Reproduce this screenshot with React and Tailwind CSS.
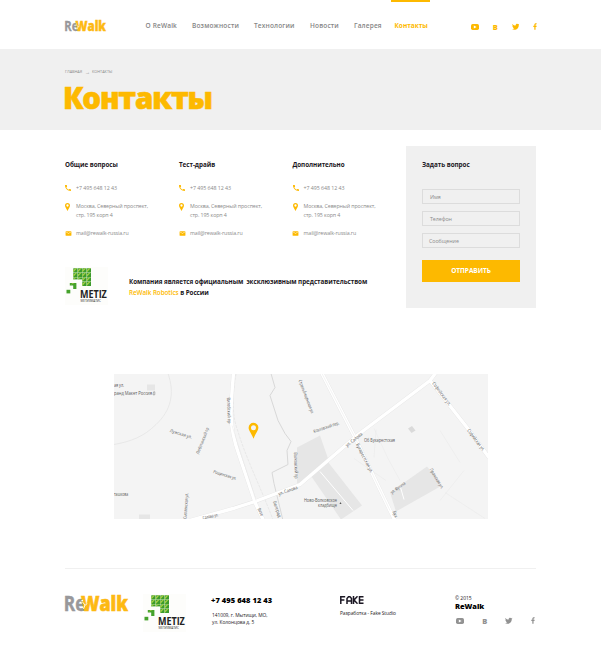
import React from "react";
import { FaTwitter, FaFacebookF } from "react-icons/fa";
import { MdCall, MdEmail } from "react-icons/md";

function Youtube({ hole }) {
  return (
    <svg viewBox="0 0 16 12" className="h-[6px] w-[8px]">
      <rect width="16" height="12" rx="3.4" fill="currentColor" />
      <path d="M5.600 3v6l5.600-3z" fill={hole} />
    </svg>
  );
}

function Socials({ className }) {
  return (
    <div className={"flex items-center justify-between " + className}>
      <Youtube hole="#fff" />
      <span className="text-[7.500px] leading-[8px] font-extrabold">В</span>
      <FaTwitter className="size-[7.500px]" />
      <FaFacebookF className="h-[7px] w-[4px]" />
    </div>
  );
}

function Logo({ className }) {
  return (
    <svg viewBox="0 0 63 16" className={"overflow-visible " + className} fontFamily="Open Sans, sans-serif" fontWeight="800">
      <text x="-1.200" y="15.200" fontSize="20.500" fontWeight="700" fill="#98989b" stroke="#98989b" strokeWidth=".5" textLength="21.500" lengthAdjust="spacingAndGlyphs">Re</text>
      <text x="16" y="15.200" fontSize="20.500" fill="#fdb913" stroke="#fdb913" strokeWidth=".6" textLength="47" lengthAdjust="spacingAndGlyphs">Walk</text>
      <path d="M17.500 6l2.500 3-1.500 4M20 9.500l2-2" fill="none" stroke="#fff" strokeWidth=".9" />
      <circle cx="17.200" cy="4.600" r=".9" fill="#fff" />
    </svg>
  );
}

const cells = [
  [0, 0], [1, 0], [2, 0], [3, 0],
  [0, 1], [1, 1], [2, 1], [3, 1],
  [0, 2, 0.5], [1, 2, 0.5], [2, 2], [3, 2],
  [2, 3], [3, 3],
];

function Metiz({ className }) {
  return (
    <svg viewBox="0 0 43 38" className={className} fontFamily="Open Sans, sans-serif">
      <rect width="43" height="38" fill="#fdfdfb" />
      {cells.map(([c, r, h = 1]) => (
        <g key={c + "-" + r} transform={`translate(${8.3 + c * 4.5} ${1.3 + r * 4.5}) scale(1 ${h})`}>
          <rect width="4.200" height="4.200" fill="#3c9b2c" />
          <path d="M0 4.200V1.800L2.400 0h1.400z" fill="#a5cf45" />
        </g>
      ))}
      <path d="M4.800 16h6.600v6H8.200v-3.400H4.800z" fill="#45a22c" />
      <path d="M5.500 18l2-2h2z" fill="#9ccb3b" />
      <rect x="1.500" y="22.800" width="3.800" height="3.600" fill="#45a22c" />
      <text x="15" y="30.600" fontSize="9.900" fontWeight="700" fill="#222" textLength="26.800" lengthAdjust="spacingAndGlyphs">METIZ</text>
      <text x="15.500" y="35.200" fontSize="3.200" fill="#333" textLength="20.500" lengthAdjust="spacingAndGlyphs">МЕТИЗМАТИС</text>
    </svg>
  );
}

function Pin({ className }) {
  return (
    <svg viewBox="0 0 10 16" className={className}>
      <path fillRule="evenodd" d="M5 0a5 5 0 0 1 5 5c0 3-3.200 6.500-5 11C3.200 11.500 0 8 0 5a5 5 0 0 1 5-5zM5 2.700a2.300 2.300 0 1 0 0 4.600 2.300 2.300 0 0 0 0-4.600z" fill="#fdb900" />
    </svg>
  );
}

function Contact({ title, className }) {
  return (
    <div className={className}>
      <h2 className="h-[10px] text-[6.300px] leading-[10.500px] font-bold text-[#1c1824]">{title}</h2>
      <div className="mt-[13px] flex h-[10px] items-center">
        <MdCall className="mr-[4px] -ml-[1px] size-[8px] text-[#fdb900]" />
        <span>+7 495 648 12 43</span>
      </div>
      <div className="mt-[8.500px] flex">
        <Pin className="mt-[1.500px] mr-[6px] h-[8px] w-[5px]" />
        <p className="tracking-[-0.110px]">Москва, Северный проспект,<br />стр. 195 корп 4</p>
      </div>
      <div className="mt-[8.500px] flex h-[10px] items-center">
        <MdEmail className="mr-[4.500px] -ml-[.5px] size-[7px] text-[#fdb900]" />
        <span className="tracking-[-0.110px]">mail@rewalk-russia.ru</span>
      </div>
    </div>
  );
}

const labels = [
  ["ая ул.", 114, 386, 0, 10],
  ["ранд Макет Россия", 114, 394.500, 0, 38],
  ["Лужская ул.", 169.500, 431.500, 17, 23],
  ["Люботинский пр", 199, 454, -69, 28],
  ["Рощинская ул.", 213, 472.500, 17, 24],
  ["Витебский пр", 227, 397, 88, 26],
  ["ташкова", 114, 495.500, 0, 14],
  ["Смоленская ул.", 186.500, 518.500, -86, 26],
  ["Салова ул.", 203, 519, -12, 16],
  ["ул. Салова", 279, 495, -20, 20],
  ["Вите", 257.500, 508.500, 66, 8],
  ["Белград", 273, 501, 72, 17],
  ["Стрельбищенская ул.", 298.500, 380, 69, 36],
  ["Козловский пер.", 314, 432.500, -19, 27],
  ["Волковский пр", 294, 452, 88, 26],
  ["ул. Салова", 347, 446.500, -38, 20],
  ["Бухарестская ул.", 356, 444, 63, 32],
  ["Софийская ул.", 432, 383, 53, 28],
  ["Софийская ул.", 467, 430, 53, 26],
  ["Об Бухарестская", 364, 441.500, 0, 31],
  ["ул. Фучика", 392, 493.500, -36, 17],
  ["Пражская ул.", 429.500, 469, 59, 23],
  ["Ново-Волковское", 304, 501, 0, 33],
  ["кладбище", 318, 506.300, 0, 19],
  ["Бух", 392.500, 511, 68, 7],
];

function CityMap() {
  return (
    <svg viewBox="114 373.500 374 145.500" className="block h-[145.500px] w-[374px] bg-[#f4f4f4]" fontFamily="Open Sans, sans-serif">
      <g fill="#e6e6e6">
        <path d="M297 447l23-12 9 26-29 22h-3zM308 471l18-12 36 46-21 14zM390 492l37-26 15 19-46 26z" />
        <path d="M408 428l4-2.500 3.500 4.500-4 2.500z" fill="#dadada" />
        <path d="M147 384h8v6h-8zM139 514h11v5h-11z" />
      </g>
      <g fill="none" stroke="#e2e2e2" strokeWidth=".7">
        <path d="M168 373c7 20 3 37-12 51-12 12-25 17-42 20" />
        <path d="M236 373c-4 26-4 42 2 58 7 24 20 50 35 88" strokeDasharray="3 1" />
        <path d="M374 428l14 30 12 22M386 480l-32-22M376 429l-2 28M440 500l24-30M445 492l40 26M440 430l20 32" strokeWidth=".3" />
      </g>
      <path d="M271 373l4 14-5 8 8 25 7 13 6 8-4 9 1 14-16 8 2 11 9 37" fill="none" stroke="#d8d8d8" strokeWidth="1" />
      <g fill="none" stroke="#e4e4e4" strokeWidth="4">
        <path d="M233.500 373c-3 34-5 52 5 80l17 50 8 17M322 373l33 64 35 73 5 10M430 380l37 47 22 30" />
        <path d="M190 520l43-12 22-7 45-17 57-49 73-55 6-8" />
      </g>
      <g fill="none" stroke="#fff" strokeWidth="3.400">
        <path d="M233.500 373c-3 34-5 52 5 80l17 50 8 17M322 373l33 64 35 73 5 10M430 380l37 47 22 30" />
        <path d="M190 520l43-12 22-7 45-17 57-49 73-55 6-8" />
      </g>
      <path d="M320 471l33 39M400 485l4 14" stroke="#fff" />
      <path d="M232 425l24 75M322 373l33 64 35 73" fill="none" stroke="#e6e6e6" strokeWidth=".5" />
      <path d="M339.500 503.500l1-2 1 2z" fill="#555" />
      <g fontSize="4.600" fill="#5a5a5a">
        {labels.map(([t, x, y, a, w], i) => (
          <text key={i} transform={`translate(${x} ${y}) rotate(${a})`} textLength={w} lengthAdjust="spacingAndGlyphs">{t}</text>
        ))}
        <path d="M153 394.300l.6-3h1.200v3z" fill="none" stroke="#777" strokeWidth=".5" />
      </g>
      <path fillRule="evenodd" d="M253.500 422.300a4.900 4.900 0 0 1 4.900 4.900c0 3-3.300 6.300-4.900 11-1.600-4.700-4.900-8-4.900-11a4.900 4.900 0 0 1 4.900-4.900zm0 2.500a2.500 2.500 0 1 0 0 5 2.500 2.500 0 0 0 0-5z" fill="#fdb900" />
    </svg>
  );
}

export default function App() {
  return (
    <div className="h-[649px] w-[601px] overflow-hidden bg-white font-['Open_Sans',sans-serif] text-[5.300px] leading-[9px] tracking-[-0.050px] text-[#8a8a8a]">
      <header className="flex h-[49px] pl-[65px]">
        <Logo className="mt-[20.500px] h-[10.400px] w-[41px]" />
        <nav className="flex pl-[39.500px] text-[6.500px] leading-[52px] font-semibold tracking-[0.170px] whitespace-nowrap text-[#858585]">
          <a className="w-[46.500px]">О ReWalk</a>
          <a className="w-[62px]">Возможности</a>
          <a className="w-[56px]">Технологии</a>
          <a className="w-[44px]">Новости</a>
          <a className="w-[36.500px]">Галерея</a>
          <a className="h-[49px] w-[39.500px] border-t-[2.500px] border-[#fdb900] pl-[4px] leading-[47px] font-bold tracking-normal text-[#fdb900]">Контакты</a>
        </nav>
        <Socials className="mt-[4px] ml-[41px] h-[45px] w-[66px] text-[#fdb900]" />
      </header>

      <section className="h-[81px] bg-[#f0f0f0] pl-[65px]">
        <div className="flex pt-[19px] text-[3.800px] leading-[8px] tracking-normal whitespace-nowrap">
          <span className="w-[20px]">ГЛАВНАЯ</span>
          <span className="w-[7px] text-[5px]">→</span>
          <span>КОНТАКТЫ</span>
        </div>
        <h1 className="-ml-[2px] pt-[1.500px] text-[29.500px] leading-[40px] font-extrabold tracking-[-1.200px] text-[#fdb900] [-webkit-text-stroke:0.6px_#fdb900]">Контакты</h1>
      </section>

      <main className="flex h-[243.500px] pt-[16px] pl-[65px]">
        <div className="w-[341px] pt-[14px] whitespace-nowrap">
          <div className="flex">
            <Contact title="Общие вопросы" className="w-[114px]" />
            <Contact title="Тест-драйв" className="w-[113.500px]" />
            <Contact title="Дополнительно" />
          </div>
          <div className="mt-[29px] flex">
            <Metiz className="h-[38px] w-[43px]" />
            <p className="pt-[8.500px] pl-[21px] text-[6.300px] leading-[11px] font-bold whitespace-pre text-[#1c1824]">
              {"Компания является официальным  эксклюзивным представительством"}<br />
              <span className="font-semibold text-[#fdb900]">ReWalk Robotics</span> в России
            </p>
          </div>
        </div>
        <form className="flex h-[162px] w-[130px] flex-col bg-[#f0f0f0] px-[16px] pt-[14px]">
          <h2 className="mb-[19px] text-[6.350px] leading-[10px] font-bold text-[#1c1824]">Задать вопрос</h2>
          <div className="mb-[7px] h-[15px] border border-[#dcdcdc] pl-[7px] leading-[14px]">Имя</div>
          <div className="mb-[7px] h-[15px] border border-[#dcdcdc] pl-[7px] leading-[14px]">Телефон</div>
          <div className="h-[15px] border border-[#dcdcdc] pl-[6px] leading-[14px]">Сообщение</div>
          <div className="mt-[12px] h-[22px] bg-[#fdb900] text-center text-[6.500px] leading-[22px] font-bold text-white">ОТПРАВИТЬ</div>
        </form>
      </main>

      <div className="pl-[114px]"><CityMap /></div>

      <footer className="mt-[48.500px] ml-[65px] flex h-[81px] w-[471px] border-t border-[#f0f0f0] whitespace-nowrap text-[#1c1824]">
        <div className="w-[78px] pt-[27.500px]"><Logo className="h-[16px] w-[63px]" /></div>
        <div className="w-[68px] pt-[25px]"><Metiz className="h-[38px] w-[43px]" /></div>
        <div className="w-[129px] pt-[26px]">
          <div className="text-[7.500px] leading-[11px] font-extrabold tracking-[0.040px] text-black">+7 495 648 12 43</div>
          <p className="mt-[6px] pl-[1px] text-[4.850px] leading-[7.500px]">141009, г. Мытищи, МО,<br />ул. Колонцова д. 5</p>
        </div>
        <div className="w-[115px] pt-[27px]">
          <svg viewBox="0 0 24 8" className="h-[8px] w-[24px]" fill="none" stroke="#1c1824" strokeWidth="1.500">
            <path d="M.8 8V.8h4.400M.8 4h3.600M7 8V2.500L8.500.8h1.500l1.500 1.700V8M7 5h4.500M13.500 0v8M17.500.3L14 4l3.500 3.700M23.500.8h-4v6.400h4M19.500 4h4" />
          </svg>
          <p className="mt-[5px] text-[4.850px] leading-[8px]">Разработка - Fake Studio</p>
        </div>
        <div className="pt-[26px]">
          <p className="text-[5px] leading-[6px]">© 2015</p>
          <p className="text-[7.500px] leading-[10px] font-extrabold text-black">ReWalk</p>
          <Socials className="mt-[6px] ml-[1px] w-[79px] text-[#929292]" />
        </div>
      </footer>
    </div>
  );
}
